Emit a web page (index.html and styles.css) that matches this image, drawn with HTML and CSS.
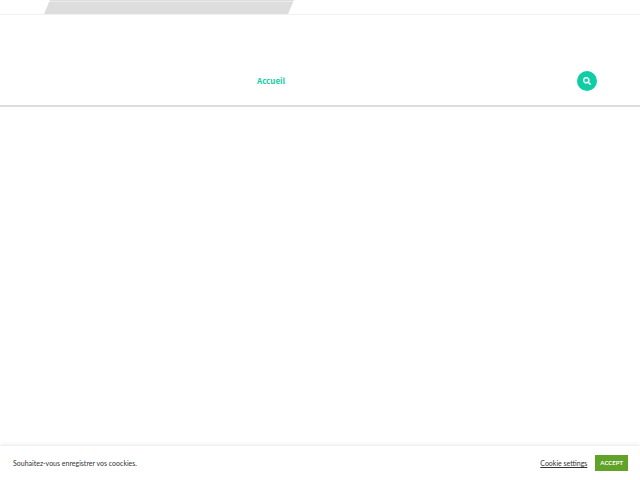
FILE: index.html
```html
<!DOCTYPE html>
<html lang="fr">
<head>
<meta charset="UTF-8">
<meta name="viewport" content="width=device-width, initial-scale=1.0">
<title>Accueil</title>
<link rel="stylesheet" href="styles.css">
</head>
<body>
<header>
  <div class="topbar">
    <div class="topbar-shape"></div>
  </div>
  <div class="navbar">
    <nav>
      <a href="#">Accueil</a>
    </nav>
    <button type="button" class="search-btn" aria-label="Rechercher">
      <svg viewBox="0 0 512 512" width="8" height="8" aria-hidden="true">
        <path fill="currentColor" stroke="currentColor" stroke-width="20" d="M505 442.7L405.3 343c-4.5-4.5-10.6-7-17-7H372c27.6-35.3 44-79.7 44-128C416 93.1 322.9 0 208 0S0 93.1 0 208s93.1 208 208 208c48.3 0 92.7-16.4 128-44v16.3c0 6.4 2.5 12.5 7 17l99.7 99.7c9.4 9.4 24.6 9.4 33.9 0l28.3-28.3c9.4-9.4 9.4-24.6.1-34zM208 336c-70.7 0-128-57.2-128-128 0-70.7 57.2-128 128-128 70.7 0 128 57.2 128 128 0 70.7-57.2 128-128 128z"/>
      </svg>
    </button>
  </div>
</header>
<main></main>
<div class="cookie-bar">
  <span>Souhaitez-vous enregistrer vos coockies.</span>
  <div class="cookie-actions">
    <a href="#">Cookie settings</a>
    <button type="button">ACCEPT</button>
  </div>
</div>
</body>
</html>
```
FILE: styles.css
```css
* {
  box-sizing: border-box;
}
body {
  margin: 0;
  min-height: 100vh;
  display: flex;
  flex-direction: column;
  background: #fff;
  color: #333;
  font-family: "Noto Sans CJK SC", "Open Sans", sans-serif;
}
main {
  flex: 1;
}
.topbar {
  height: 15px;
  padding: 0 44px;
  border-bottom: 1px solid #f0f0f0;
}
.topbar-shape {
  width: 250px;
  height: 14px;
  background: linear-gradient(#ddd 1px, #ececec 1px, #ececec 2px, #ddd 2px);
  clip-path: polygon(6px 0, 100% 0, calc(100% - 6px) 100%, 0 100%);
}
.navbar {
  display: flex;
  align-items: center;
  justify-content: space-between;
  padding: 56px 43px 14px;
  border-bottom: 2px solid #ddd;
}
nav {
  flex: 1;
  display: flex;
  padding-left: 214px;
}
nav a {
  color: #0fcda5;
  font-size: 8px;
  font-weight: bold;
  line-height: 20px;
  text-decoration: none;
}
.search-btn {
  display: flex;
  align-items: center;
  justify-content: center;
  width: 20px;
  height: 20px;
  padding: 0;
  border: 0;
  border-radius: 50%;
  background: #0fcda5;
  color: #fff;
}
.cookie-bar {
  position: sticky;
  bottom: 0;
  display: flex;
  align-items: center;
  justify-content: space-between;
  padding: 9px 12px 9px 13px;
  background: #fff;
  box-shadow: 0 -1px 4px rgba(0,0,0,0.1);
  font-family: Lato, sans-serif;
  font-size: 7px;
  line-height: 16px;
}
.cookie-actions {
  display: flex;
  align-items: center;
  gap: 8px;
}
.cookie-actions a {
  color: #333;
}
.cookie-actions button {
  padding: 0 5px;
  border: 0;
  background: #61a229;
  color: #fff;
  font-family: inherit;
  font-size: 6px;
  font-weight: bold;
  line-height: 16px;
}
```
